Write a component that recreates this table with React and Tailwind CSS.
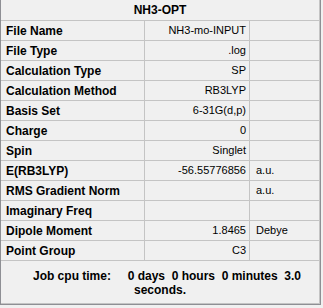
import React from 'react';

// Summary rows: [label, value, unit]
const rows = [
  ['File Name', 'NH3-mo-INPUT', ''],
  ['File Type', '.log', ''],
  ['Calculation Type', 'SP', ''],
  ['Calculation Method', 'RB3LYP', ''],
  ['Basis Set', '6-31G(d,p)', ''],
  ['Charge', '0', ''],
  ['Spin', 'Singlet', ''],
  ['E(RB3LYP)', '-56.55776856', 'a.u.'],
  ['RMS Gradient Norm', '', 'a.u.'],
  ['Imaginary Freq', '', ''],
  ['Dipole Moment', '1.8465', 'Debye'],
  ['Point Group', 'C3', ''],
];

const SummaryRow = ({ label, value, unit }) => (
  <div className="flex h-[20px] border-b border-[#c4c4c4]">
    <div className="w-[144px] border-r border-[#c4c4c4] pl-[5px] flex items-center font-bold text-[12px]">
      {label}
    </div>
    <div className="w-[105px] border-r border-[#c4c4c4] pr-[3px] flex items-center justify-end text-[11px]">
      {value}
    </div>
    <div className="w-[70px] border-r border-[#c4c4c4] pl-[6px] flex items-center text-[11px]">
      {unit}
    </div>
  </div>
);

export default function App() {
  return (
    <div
      className="w-[323px] h-[308px] bg-[#f0f0f0] text-black"
      style={{ fontFamily: '"Liberation Sans", Arial, sans-serif' }}
    >
      <div className="w-[321px] h-[305px] border-l border-r border-b border-[#8e8f94] flex flex-col">
        {/* Title */}
        <div className="h-[21px] border-b border-[#c4c4c4] border-r flex items-center justify-center font-bold text-[12px]">
          NH3-OPT
        </div>

        {rows.map(([label, value, unit]) => (
          <SummaryRow key={label} label={label} value={value} unit={unit} />
        ))}

        {/* Job time footer */}
        <div className="flex-1 border-b border-r border-[#c4c4c4] flex flex-col items-center justify-center font-bold text-[12px] leading-[14px] pt-[2px]">
          <div className="whitespace-pre pl-[14px]">{'Job cpu time:     0 days  0 hours  0 minutes  3.0'}</div>
          <div>seconds.</div>
        </div>
      </div>
    </div>
  );
}
